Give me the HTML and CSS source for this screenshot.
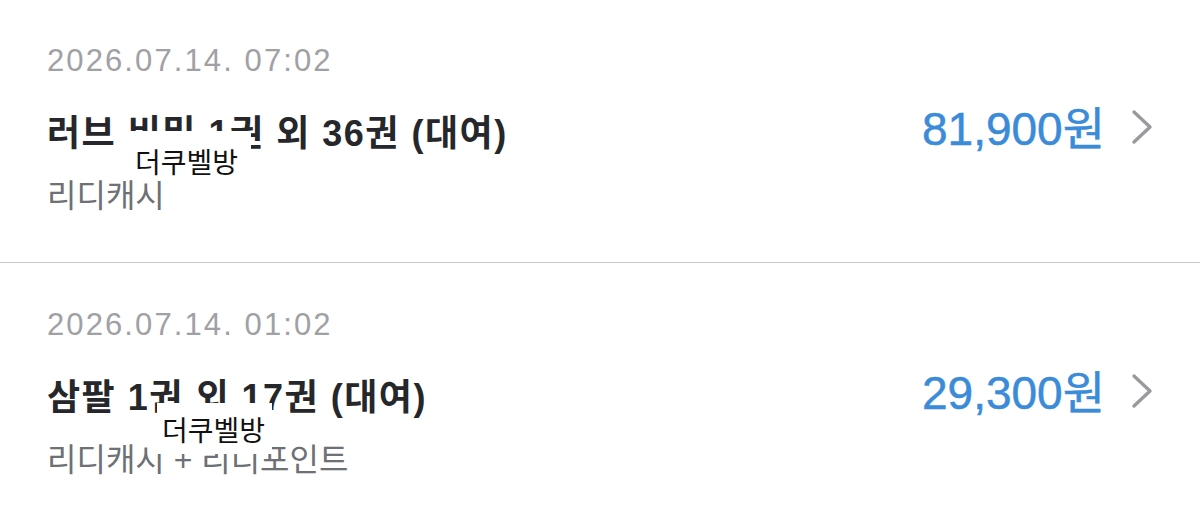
FILE: index.html
```html
<!DOCTYPE html>
<html lang="ko">
<head>
<meta charset="utf-8">
<title>구매 내역</title>
<link rel="stylesheet" href="styles.css">
</head>
<body>
<ul class="history">
  <li class="entry">
    <div class="date">2026.07.14. 07:02</div>
    <div class="headline">
      <div class="title">러브 비밀 1권 외 36권 (대여)</div>
      <div class="amount">
        <span class="price">81,900원</span>
        <svg class="chevron" width="24" height="36" viewBox="0 0 24 36"><path d="M4 3 L20 18 L4 33" fill="none" stroke="#9a9a9e" stroke-width="3.4" stroke-linecap="round" stroke-linejoin="round"/></svg>
      </div>
    </div>
    <div class="method">리디캐시</div>
    <span class="tag tag-first">더쿠벨방</span>
  </li>
  <li class="entry">
    <div class="date">2026.07.14. 01:02</div>
    <div class="headline">
      <div class="title">삼팔 1권 외 17권 (대여)</div>
      <div class="amount">
        <span class="price">29,300원</span>
        <svg class="chevron" width="24" height="36" viewBox="0 0 24 36"><path d="M4 3 L20 18 L4 33" fill="none" stroke="#9a9a9e" stroke-width="3.4" stroke-linecap="round" stroke-linejoin="round"/></svg>
      </div>
    </div>
    <div class="method">리디캐시 + 리디포인트</div>
    <span class="tag tag-second">더쿠벨방</span>
  </li>
</ul>
</body>
</html>
```
FILE: styles.css
```css
* { box-sizing: border-box; }

html, body {
  margin: 0;
  padding: 0;
  background: #ffffff;
}

body {
  font-family: "Liberation Sans", "Noto Sans CJK KR", sans-serif;
  width: 1200px;
  height: 511px;
  overflow: hidden;
}

.history {
  list-style: none;
  margin: 0;
  padding: 0;
}

.entry {
  position: relative;
  height: 262px;
  padding: 43px 46px 0 47px;
}

.entry + .entry {
  border-top: 1px solid #c9c9c9;
  height: 249px;
  padding-top: 44px;
}

.date {
  font-size: 31px;
  line-height: 36px;
  color: #a0a1a5;
  letter-spacing: 2.1px;
}

.headline {
  display: flex;
  align-items: flex-start;
  justify-content: space-between;
  margin-top: 25px;
}

.title {
  margin-top: 8px;
  font-size: 36px;
  line-height: 44px;
  font-weight: 700;
  color: #25272b;
  letter-spacing: 1.5px;
}

.method {
  margin-top: 22px;
  font-size: 32px;
  line-height: 36px;
  color: #6d7075;
}

.amount {
  display: flex;
  align-items: center;
  gap: 25px;
}

.price {
  font-size: 46px;
  line-height: 50px;
  color: #3a8bd8;
  -webkit-text-stroke: 0.5px #3a8bd8;
}

.chevron {
  display: block;
  margin-top: -4px;
}

/* white name label stamped over the listing */
.tag {
  position: absolute;
  background: #ffffff;
  color: #111111;
  font-family: "Noto Sans CJK KR", sans-serif;
  font-size: 28px;
  line-height: 30px;
  white-space: nowrap;
}

.tag-first {
  left: 125px;
  top: 131px;
  padding: 15px 13px 4px 10px;
}

.tag-second {
  left: 157px;
  top: 140px;
  padding: 11px 7px 10px 5px;
}
```
